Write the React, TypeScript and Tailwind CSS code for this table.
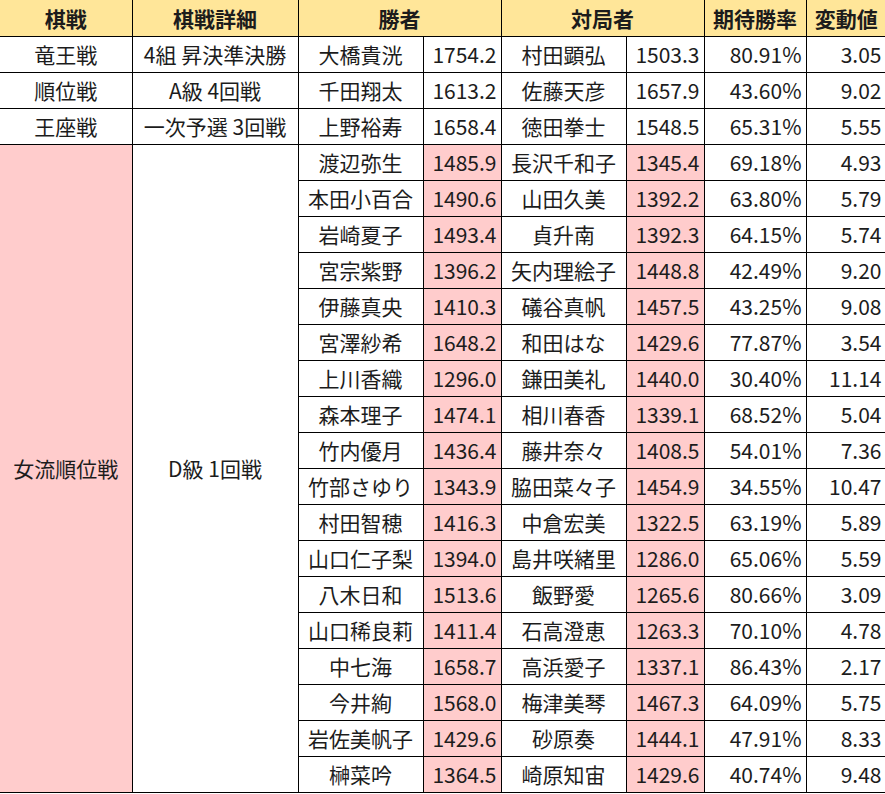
import React from "react";

type Game = {
  winner: string;
  winnerRate: string;
  opponent: string;
  opponentRate: string;
  expected: string;
  delta: string;
};

const topGames: (Game & { event: string; detail: string })[] = [
  { event: "竜王戦", detail: "4組 昇決準決勝", winner: "大橋貴洸", winnerRate: "1754.2", opponent: "村田顕弘", opponentRate: "1503.3", expected: "80.91%", delta: "3.05" },
  { event: "順位戦", detail: "A級 4回戦", winner: "千田翔太", winnerRate: "1613.2", opponent: "佐藤天彦", opponentRate: "1657.9", expected: "43.60%", delta: "9.02" },
  { event: "王座戦", detail: "一次予選 3回戦", winner: "上野裕寿", winnerRate: "1658.4", opponent: "徳田拳士", opponentRate: "1548.5", expected: "65.31%", delta: "5.55" },
];

// 女流順位戦 D級 1回戦（棋戦・詳細は縦に結合）
const womenGames: Game[] = [
  { winner: "渡辺弥生", winnerRate: "1485.9", opponent: "長沢千和子", opponentRate: "1345.4", expected: "69.18%", delta: "4.93" },
  { winner: "本田小百合", winnerRate: "1490.6", opponent: "山田久美", opponentRate: "1392.2", expected: "63.80%", delta: "5.79" },
  { winner: "岩崎夏子", winnerRate: "1493.4", opponent: "貞升南", opponentRate: "1392.3", expected: "64.15%", delta: "5.74" },
  { winner: "宮宗紫野", winnerRate: "1396.2", opponent: "矢内理絵子", opponentRate: "1448.8", expected: "42.49%", delta: "9.20" },
  { winner: "伊藤真央", winnerRate: "1410.3", opponent: "礒谷真帆", opponentRate: "1457.5", expected: "43.25%", delta: "9.08" },
  { winner: "宮澤紗希", winnerRate: "1648.2", opponent: "和田はな", opponentRate: "1429.6", expected: "77.87%", delta: "3.54" },
  { winner: "上川香織", winnerRate: "1296.0", opponent: "鎌田美礼", opponentRate: "1440.0", expected: "30.40%", delta: "11.14" },
  { winner: "森本理子", winnerRate: "1474.1", opponent: "相川春香", opponentRate: "1339.1", expected: "68.52%", delta: "5.04" },
  { winner: "竹内優月", winnerRate: "1436.4", opponent: "藤井奈々", opponentRate: "1408.5", expected: "54.01%", delta: "7.36" },
  { winner: "竹部さゆり", winnerRate: "1343.9", opponent: "脇田菜々子", opponentRate: "1454.9", expected: "34.55%", delta: "10.47" },
  { winner: "村田智穂", winnerRate: "1416.3", opponent: "中倉宏美", opponentRate: "1322.5", expected: "63.19%", delta: "5.89" },
  { winner: "山口仁子梨", winnerRate: "1394.0", opponent: "島井咲緒里", opponentRate: "1286.0", expected: "65.06%", delta: "5.59" },
  { winner: "八木日和", winnerRate: "1513.6", opponent: "飯野愛", opponentRate: "1265.6", expected: "80.66%", delta: "3.09" },
  { winner: "山口稀良莉", winnerRate: "1411.4", opponent: "石高澄恵", opponentRate: "1263.3", expected: "70.10%", delta: "4.78" },
  { winner: "中七海", winnerRate: "1658.7", opponent: "高浜愛子", opponentRate: "1337.1", expected: "86.43%", delta: "2.17" },
  { winner: "今井絢", winnerRate: "1568.0", opponent: "梅津美琴", opponentRate: "1467.3", expected: "64.09%", delta: "5.75" },
  { winner: "岩佐美帆子", winnerRate: "1429.6", opponent: "砂原奏", opponentRate: "1444.1", expected: "47.91%", delta: "8.33" },
  { winner: "榊菜吟", winnerRate: "1364.5", opponent: "崎原知宙", opponentRate: "1429.6", expected: "40.74%", delta: "9.48" },
];

const cell = "border border-black px-[4px] leading-none whitespace-nowrap";
const center = `${cell} text-center`;
const right = `${cell} text-right`;
const pinkRight = `${right} bg-[#ffcccc]`;

function GameCells({ g, pink }: { g: Game; pink: boolean }) {
  return (
    <>
      <td className={center}>{g.winner}</td>
      <td className={pink ? pinkRight : right}>{g.winnerRate}</td>
      <td className={center}>{g.opponent}</td>
      <td className={pink ? pinkRight : right}>{g.opponentRate}</td>
      <td className={right}>{g.expected}</td>
      <td className={right}>{g.delta}</td>
    </>
  );
}

export default function App() {
  return (
    <div className="w-[885px] h-[794px] overflow-hidden bg-white text-[#1c1c1c] text-[21px] font-['Noto_Sans_CJK_JP','Noto_Sans',sans-serif]">
      <table className="table-fixed border-collapse w-[886px] -mt-px">
        <colgroup>
          <col className="w-[132px]" />
          <col className="w-[166px]" />
          <col className="w-[125px]" />
          <col className="w-[78px]" />
          <col className="w-[125px]" />
          <col className="w-[78px]" />
          <col className="w-[102px]" />
          <col className="w-[80px]" />
        </colgroup>
        <thead>
          <tr className="h-[37px] bg-[#ffe699] font-bold">
            <th className={`${center} border-l-0`}>棋戦</th>
            <th className={center}>棋戦詳細</th>
            <th className={center} colSpan={2}>勝者</th>
            <th className={center} colSpan={2}>対局者</th>
            <th className={center}>期待勝率</th>
            <th className={`${center} border-r-0`}>変動値</th>
          </tr>
        </thead>
        <tbody>
          {topGames.map((g) => (
            <tr key={g.winner} className="h-[36px]">
              <td className={`${center} border-l-0`}>{g.event}</td>
              <td className={center}>{g.detail}</td>
              <GameCells g={g} pink={false} />
            </tr>
          ))}
          {womenGames.map((g, i) => (
            <tr key={g.winner} className="h-[36px]">
              {i === 0 && (
                <>
                  <td rowSpan={womenGames.length} className={`${center} border-l-0 bg-[#ffcccc]`}>
                    女流順位戦
                  </td>
                  <td rowSpan={womenGames.length} className={center}>
                    D級 1回戦
                  </td>
                </>
              )}
              <GameCells g={g} pink={true} />
            </tr>
          ))}
        </tbody>
      </table>
    </div>
  );
}
